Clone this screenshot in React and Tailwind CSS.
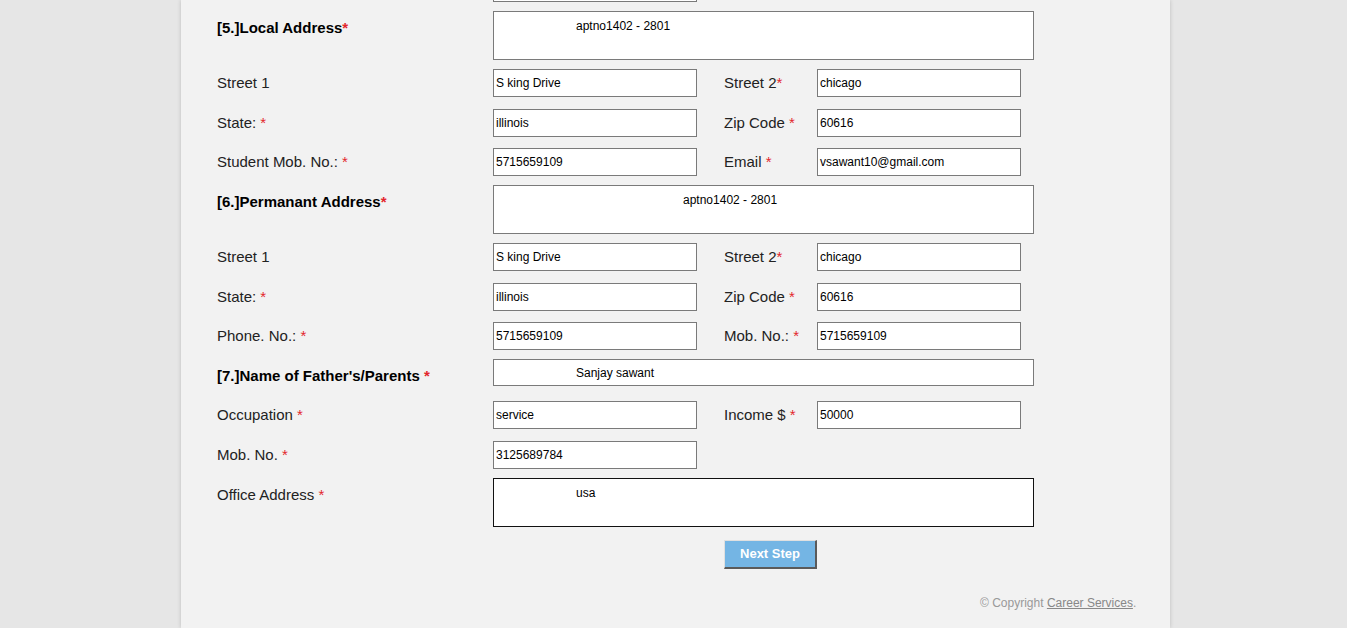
const Req = ({ space = true }) => (
  <span className="text-[#e3262c]">{space ? " *" : "*"}</span>
);

const Field = ({ value, w = "w-[204px]" }) => (
  <div
    className={`${w} h-[28px] border border-[#7a7a7a] bg-white flex items-center pl-[2px] text-[12px] text-black`}
  >
    {value}
  </div>
);

const Area = ({ value, pl, dark }) => (
  <div
    className={`w-[541px] h-[49px] border ${
      dark ? "border-[#111]" : "border-[#7a7a7a]"
    } bg-white text-[12px] text-black pt-[5px] ${pl}`}
  >
    {value}
  </div>
);

const Row = ({ mt, label, value, label2, value2 }) => (
  <div className={`flex items-center h-[28px] ${mt}`}>
    <div className="w-[276px] text-[15px] leading-[18px] text-[#222]">{label}</div>
    <Field value={value} />
    {label2 && (
      <>
        <div className="ml-[27px] w-[93px] text-[15px] leading-[18px] text-[#222]">{label2}</div>
        <Field value={value2} />
      </>
    )}
  </div>
);

const AreaRow = ({ mt, label, children }) => (
  <div className={`flex items-start ${mt}`}>
    <div className="w-[276px] pt-[8px] text-[15px] leading-[18px] font-bold text-black">{label}</div>
    {children}
  </div>
);

export default function App() {
  return (
    <div
      className="min-h-[628px] bg-[#e6e6e6] overflow-hidden"
      style={{ fontFamily: '"Liberation Sans", Arial, sans-serif' }}
    >
      <div className="ml-[181px] w-[989px] min-h-[628px] bg-[#f2f2f2] shadow-[0_0_4px_rgba(0,0,0,0.18)] pl-[36px]">
        <div className="ml-[276px] w-[204px] h-[2px] border-x border-b border-[#7a7a7a] bg-white" />

        <AreaRow mt="mt-[9px]" label={<>[5.]Local Address<Req space={false} /></>}>
          <Area value="aptno1402 - 2801" pl="pl-[82px]" />
        </AreaRow>
        <Row mt="mt-[9px]" label="Street 1" value="S king Drive" label2={<>Street 2<Req space={false} /></>} value2="chicago" />
        <Row mt="mt-[12px]" label={<>State:<Req /></>} value="illinois" label2={<>Zip Code<Req /></>} value2="60616" />
        <Row mt="mt-[11px]" label={<>Student Mob. No.:<Req /></>} value="5715659109" label2={<>Email<Req /></>} value2="vsawant10@gmail.com" />

        <AreaRow mt="mt-[9px]" label={<>[6.]Permanant Address<Req space={false} /></>}>
          <Area value="aptno1402 - 2801" pl="pl-[189px]" />
        </AreaRow>
        <Row mt="mt-[9px]" label="Street 1" value="S king Drive" label2={<>Street 2<Req space={false} /></>} value2="chicago" />
        <Row mt="mt-[12px]" label={<>State:<Req /></>} value="illinois" label2={<>Zip Code<Req /></>} value2="60616" />
        <Row mt="mt-[11px]" label={<>Phone. No.:<Req /></>} value="5715659109" label2={<>Mob. No.:<Req /></>} value2="5715659109" />

        <div className="flex items-center h-[27px] mt-[9px]">
          <div className="w-[276px] pt-[6px] text-[15px] leading-[18px] font-bold text-black">
            [7.]Name of Father's/Parents<Req />
          </div>
          <div className="w-[541px] h-[27px] border border-[#7a7a7a] bg-white flex items-center pl-[82px] text-[12px] text-black">
            Sanjay sawant
          </div>
        </div>
        <Row mt="mt-[15px]" label={<>Occupation<Req /></>} value="service" label2={<>Income $<Req /></>} value2="50000" />
        <Row mt="mt-[12px]" label={<>Mob. No.<Req /></>} value="3125689784" />

        <div className="flex items-start mt-[9px]">
          <div className="w-[276px] pt-[8px] text-[15px] leading-[18px] text-[#222]">
            Office Address<Req />
          </div>
          <Area value="usa" pl="pl-[82px]" dark />
        </div>

        <div className="mt-[13px] ml-[507px]">
          <button className="w-[93px] h-[29px] bg-[#74b5e4] text-white text-[13px] font-bold border-t border-l border-t-[#e0e0e0] border-l-[#e0e0e0] border-r-2 border-b-2 border-r-[#5a5a5a] border-b-[#5a5a5a]">
            Next Step
          </button>
        </div>

        <div className="mt-[25px] ml-[763px] text-[12px] text-[#999]">
          © Copyright <span className="underline text-[#888]">Career Services</span>.
        </div>
      </div>
    </div>
  );
}
